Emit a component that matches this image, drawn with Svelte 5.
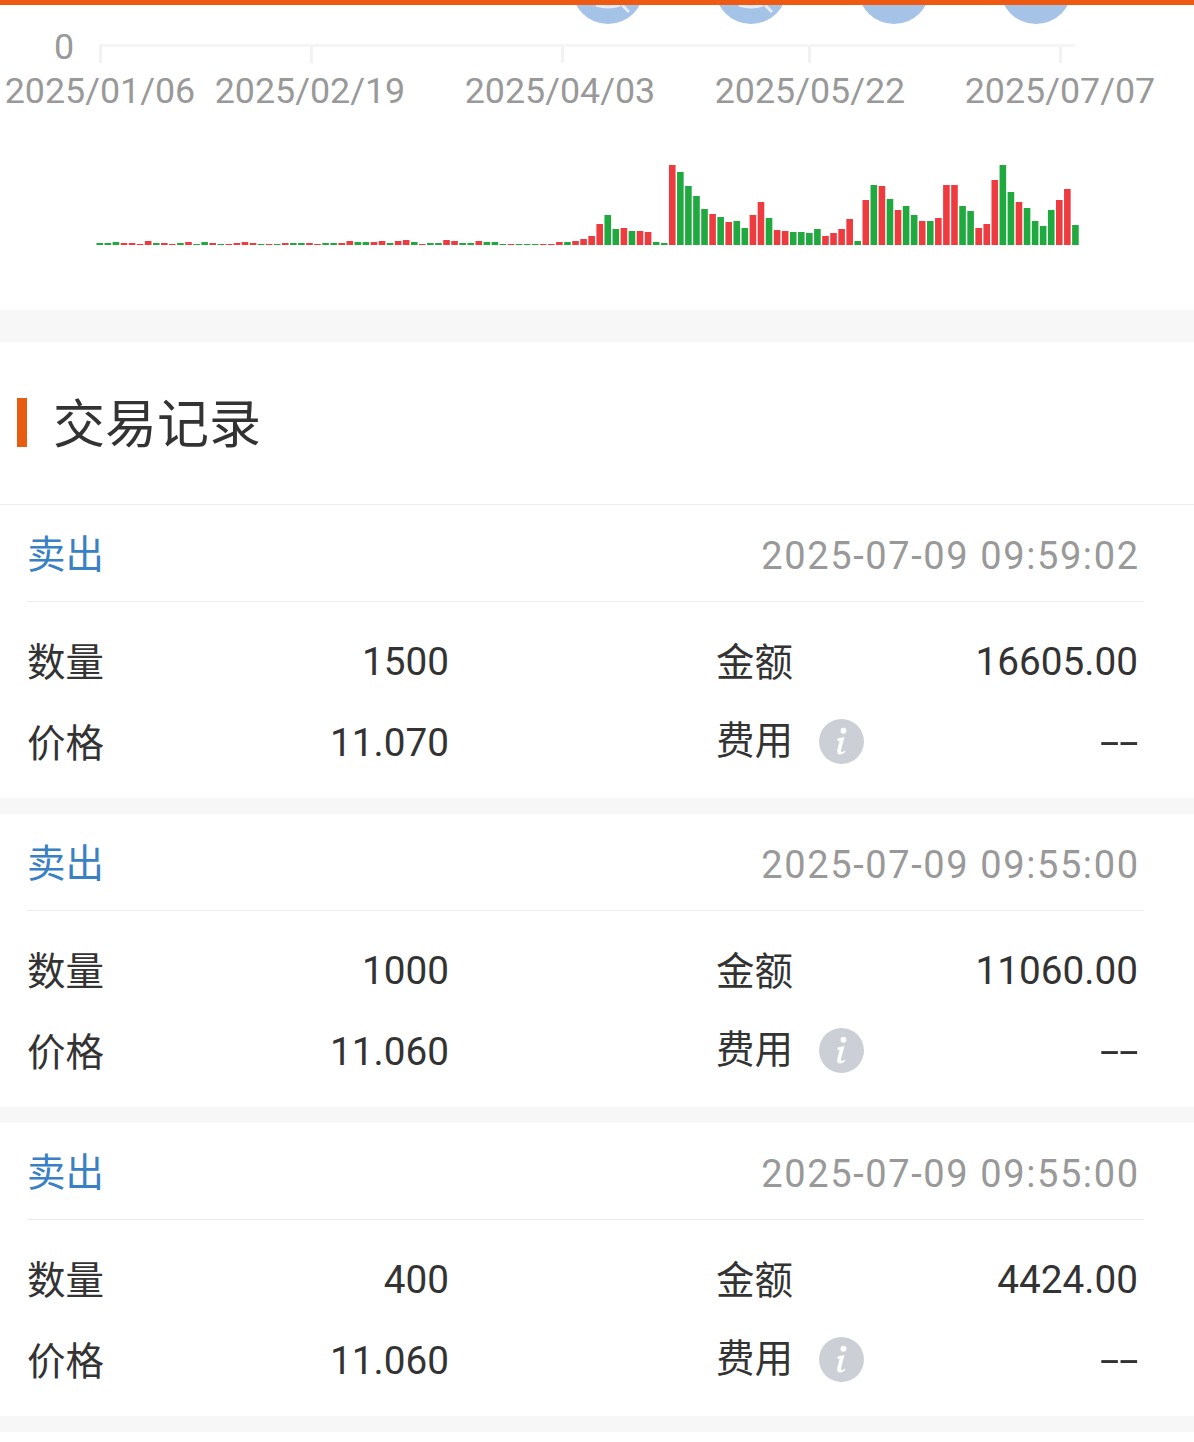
<script>
    // g/r + bar height in px, oldest to newest, red = up
    const raw = "g2 g2 g3 r2 r2 r1 r4 g2 r2 r1 g2 r3 g1 g3 r2 g1 r1 r2 r3 r2 g1 r1 g1 r2 g2 g2 r2 r1 g2 g2 r2 r4 g3 g3 r3 r4 g2 r4 r5 g3 r1 g2 g2 r5 r4 g2 g2 r4 g3 g3 g1 r1 g1 g1 g1 r1 r1 r3 g3 r4 r6 r9 r21 g30 g16 r17 g14 r14 r13 g3 g2 r80 g73 g59 g49 g36 r31 g28 r23 g24 g17 r30 r43 g27 r15 r14 g13 g13 g12 g16 r9 r12 r16 r26 g4 r45 g60 r59 g46 r35 g39 g30 r24 g24 r27 r60 r60 g39 g34 r17 r21 r65 g80 g53 r43 g37 g24 g19 g35 r45 r56 g20";
    const bars = raw.split(" ").map((s) => ({ up: s[0] === "r", h: Number(s.slice(1)) }));

    const ticks = [
        { x: 100, label: "2025/01/06", tx: 100 },
        { x: 311, label: "2025/02/19", tx: 310 },
        { x: 562, label: "2025/04/03", tx: 560 },
        { x: 809, label: "2025/05/22", tx: 810 },
        { x: 1060, label: "2025/07/07", tx: 1060 }
    ];
    const discs = [608, 751, 894, 1036];

    const trades = [
        { time: "2025-07-09 09:59:02", qty: "1500", amount: "16605.00", price: "11.070" },
        { time: "2025-07-09 09:55:00", qty: "1000", amount: "11060.00", price: "11.060" },
        { time: "2025-07-09 09:55:00", qty: "400", amount: "4424.00", price: "11.060" }
    ];
</script>

<div class="page">
    <div class="topbar"></div>

    <section class="chart">
        <svg width="1194" height="305" viewBox="0 5 1194 305">
            {#each discs as cx, i}
                <circle cx={cx} cy="-12" r="36" fill="#a4c3e6" />
                {#if i < 2}
                    <path d="M{cx - 12} 5 Q{cx} 9 {cx + 12} 5 M{cx + 14} 5 L{cx + 21} 12" fill="none" stroke="#e4edf7" stroke-width="3" />
                {/if}
            {/each}

            <text class="axis" x="74" y="59" text-anchor="end">0</text>
            <rect x="99" y="44" width="976" height="3" fill="#f5f5f5" />
            {#each ticks as t}
                <rect x={t.x - 1} y="46" width="3" height="17" fill="#f2f2f2" />
                <text class="axis" x={t.tx} y="102.500" text-anchor="middle">{t.label}</text>
            {/each}

            {#each bars as b, i}
                <rect
                    x={96.5 + i * 8.063}
                    y={245 - b.h}
                    width="6.6"
                    height={b.h}
                    fill={b.up ? "#ee3b3f" : "#1fa93f"}
                />
            {/each}
        </svg>
    </section>

    <div class="gap tall"></div>

    <h2 class="title">交易记录</h2>

    {#each trades as t}
        <article class="trade">
            <div class="head">
                <span class="side">卖出</span>
                <span class="time">{t.time}</span>
            </div>
            <div class="grid">
                <span class="label">数量</span>
                <span class="val">{t.qty}</span>
                <span class="label second">金额</span>
                <span class="val">{t.amount}</span>
                <span class="label">价格</span>
                <span class="val">{t.price}</span>
                <span class="label second fee">
                    费用
                    <svg class="info" width="45" height="45" viewBox="0 0 46 46">
                        <circle cx="23" cy="23" r="23" fill="#ccd0d6" />
                        <circle cx="25" cy="12" r="3" fill="#fff" />
                        <path d="M19 20 L26 18.5 L22.5 32 Q22 34.5 24.5 33.5 L27 32 L26.500 34 Q23 37 20 36 Q18 35 18.600 32 L21 22.500 L19 22.500 Z" fill="#fff" />
                    </svg>
                </span>
                <span class="val"><span class="dash">--</span></span>
            </div>
        </article>
        <div class="gap"></div>
    {/each}
</div>

<style>
    :global(body) {
        margin: 0;
        background: #fff;
    }
    .page {
        width: 1194px;
        height: 1442px;
        overflow: hidden;
        color: #333;
        font-family: Roboto, "Noto Sans CJK SC", sans-serif;
    }
    .topbar {
        height: 5px;
        background: #ee5a12;
    }
    .chart {
        height: 305px;
    }
    .chart svg {
        display: block;
    }
    .axis {
        font-size: 35.8px;
        fill: #999;
    }
    .gap {
        height: 16px;
        background: #f7f7f7;
    }
    .gap.tall {
        height: 32px;
    }
    .title {
        position: relative;
        margin: 0;
        height: 163px;
        box-sizing: border-box;
        padding-left: 53px;
        border-bottom: 1px solid #ececec;
        font-size: 52px;
        font-weight: 400;
        line-height: 158px;
        color: #333;
        font-family: "Noto Sans CJK SC", sans-serif;
    }
    .title::before {
        content: "";
        position: absolute;
        left: 17px;
        top: 56px;
        width: 10px;
        height: 49px;
        background: #e75c10;
    }
    .head {
        display: flex;
        justify-content: space-between;
        align-items: center;
        height: 96px;
        margin: 0 50px 0 27px;
        padding: 0 6px 0 0;
        border-bottom: 1px solid #ececec;
    }
    .side {
        padding-bottom: 4px;
        font-size: 38.5px;
        color: #3a80c4;
        font-family: "Noto Sans CJK SC", sans-serif;
    }
    .time {
        padding-top: 6px;
        margin-right: -1.6px;
        font-size: 38px;
        letter-spacing: 1.6px;
        color: #999;
    }
    .grid {
        display: grid;
        grid-template-columns: 120px 302px 267px 120px 302px;
        grid-auto-rows: 81px;
        align-items: center;
        padding: 19px 0 15px 27px;
        font-size: 38.5px;
    }
    .label {
        padding-bottom: 6px;
    }
    .second {
        grid-column: 4;
    }
    .val {
        text-align: right;
        font-size: 38.7px;
    }
    .fee {
        display: flex;
        align-items: center;
        gap: 26px;
        padding-bottom: 2px;
        line-height: 1;
        white-space: nowrap;
    }
    .info {
        flex: none;
    }
    .dash {
        display: inline-block;
        transform: translateY(-1px) scaleX(1.8);
        transform-origin: right center;
    }
</style>
